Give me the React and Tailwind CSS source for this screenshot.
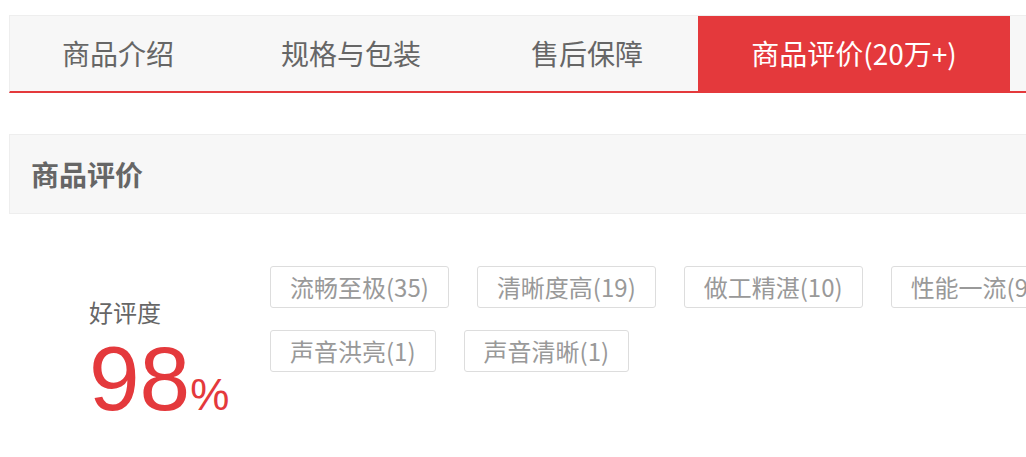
const tabs = [
  {label: '商品介绍', w: 'w-[216px]'},
  {label: '规格与包装', w: 'w-[250px]'},
  {label: '售后保障', w: 'w-[222px]'},
  {label: '商品评价(20万+)', w: 'w-[312px]', active: true},
];

const tags = [
  '流畅至极(35)',
  '清晰度高(19)',
  '做工精湛(10)',
  '性能一流(9)',
  '声音洪亮(1)',
  '声音清晰(1)',
];

const cjk = {fontFamily: '"Microsoft YaHei", "Noto Sans CJK SC", "Noto Sans", sans-serif'};

export default function App() {
  return (
    <div className="w-full overflow-hidden bg-white" style={cjk}>
      <div className="w-[1210px] pt-[15px] pl-[9px]">
        {/* tab bar */}
        <div className="flex h-[78px] border-t border-l border-[#eee] bg-[#f7f7f7] border-b-2 border-b-[#e4393c]">
          {tabs.map((t) => (
            <div
              key={t.label}
              className={`${t.w} h-[75px] text-center text-[28px] leading-[75px] ${
                t.active ? 'bg-[#e4393c] text-white' : 'text-[#666]'
              }`}
            >
              {t.label}
            </div>
          ))}
        </div>

        {/* section header */}
        <div className="mt-[41px] h-[80px] border border-[#eee] bg-[#f7f7f7] pl-[21px] text-[28px] font-bold leading-[78px] text-[#666]">
          商品评价
        </div>

        {/* rating */}
        <div className="mt-[52px] flex pb-[10px]">
          <div className="w-[261px] shrink-0 pl-[80px] pt-[30px]">
            <div className="text-[24px] leading-[32px] text-[#666]">好评度</div>
            <div
              className="flex items-baseline text-[#e4393c]"
              style={{fontFamily: '"Liberation Sans", Arial, sans-serif'}}
            >
              <span className="text-[91px] leading-[102px]">98</span>
              <span className="text-[44px] leading-[44px]">%</span>
            </div>
          </div>
          <div className="flex w-[1100px] flex-wrap gap-x-[28px] gap-y-[22px] content-start">
            {tags.map((tag) => (
              <span
                key={tag}
                className="h-[42px] rounded-[3px] border border-[#ddd] px-[19px] text-[24px] leading-[40px] text-[#999]"
              >
                {tag}
              </span>
            ))}
          </div>
        </div>
      </div>
    </div>
  );
}
